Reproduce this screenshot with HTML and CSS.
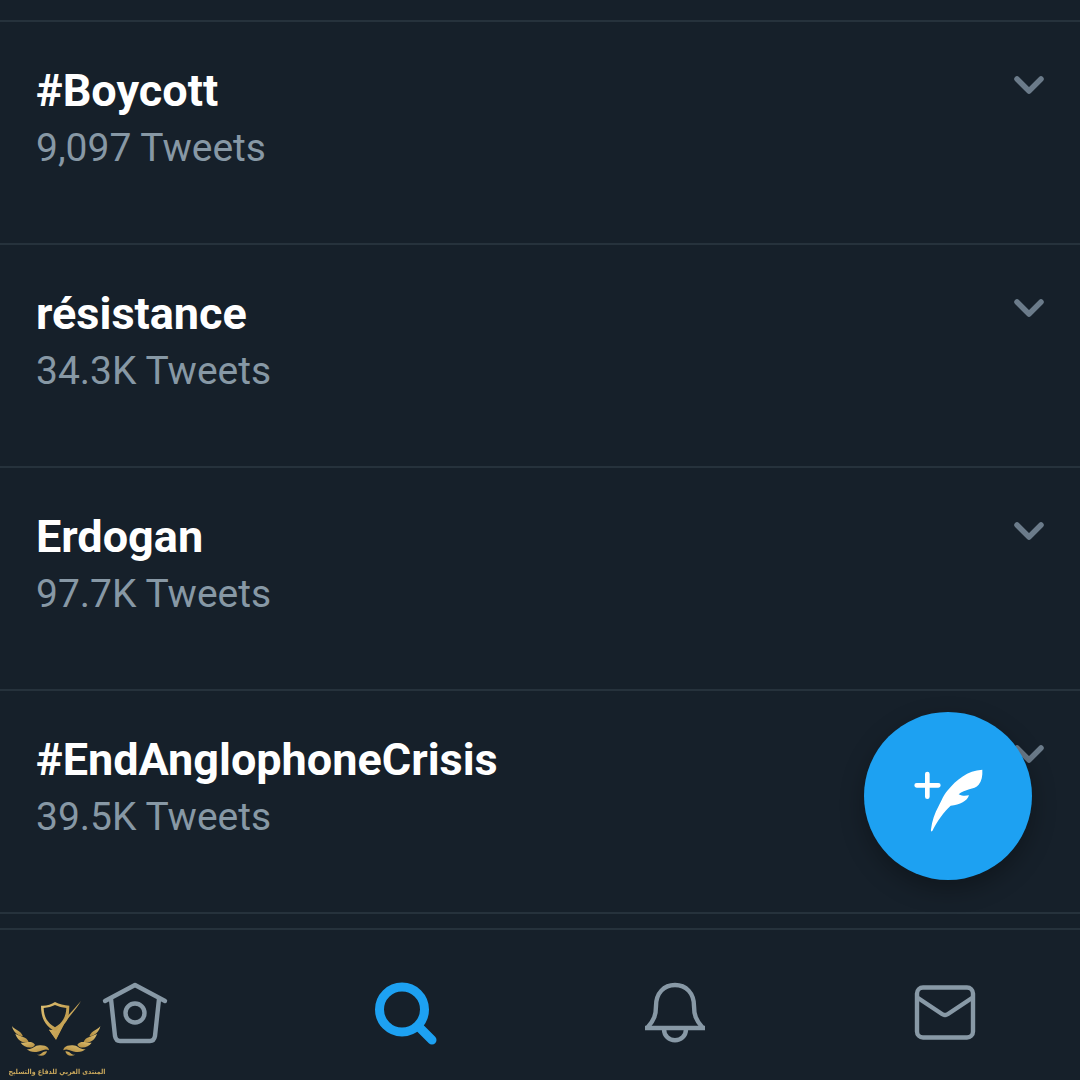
FILE: index.html
```html
<!DOCTYPE html>
<html lang="en">
<head>
  <meta charset="UTF-8" />
  <meta name="viewport" content="width=device-width, initial-scale=1.0"/>
  <title>Trends</title>
  <link rel="stylesheet" href="styles.css">
</head>
<body>

  <svg class="defs" width="0" height="0" aria-hidden="true">
    <symbol id="chevron" viewBox="0 0 36 36">
      <path d="M6 11l12 12 12-12" />
    </symbol>
  </svg>

  <main class="trends">
    <ul class="trend-list">
      <li class="trend">
        <a href="#" class="trend-link">
          <span class="trend-name">#Boycott</span>
          <span class="trend-count">9,097 Tweets</span>
        </a>
        <button type="button" class="trend-more" aria-label="More about #Boycott"><svg><use href="#chevron"/></svg></button>
      </li>
      <li class="trend">
        <a href="#" class="trend-link">
          <span class="trend-name">résistance</span>
          <span class="trend-count">34.3K Tweets</span>
        </a>
        <button type="button" class="trend-more" aria-label="More about résistance"><svg><use href="#chevron"/></svg></button>
      </li>
      <li class="trend">
        <a href="#" class="trend-link">
          <span class="trend-name">Erdogan</span>
          <span class="trend-count">97.7K Tweets</span>
        </a>
        <button type="button" class="trend-more" aria-label="More about Erdogan"><svg><use href="#chevron"/></svg></button>
      </li>
      <li class="trend">
        <a href="#" class="trend-link">
          <span class="trend-name">#EndAnglophoneCrisis</span>
          <span class="trend-count">39.5K Tweets</span>
        </a>
        <button type="button" class="trend-more" aria-label="More about #EndAnglophoneCrisis"><svg><use href="#chevron"/></svg></button>
      </li>
    </ul>
  </main>

  <!-- compose -->
  <button type="button" class="fab" aria-label="New Tweet">
    <svg viewBox="180 174 228 228">
      <path class="plus" d="M232 222v68M200 256h65" />
      <path d="M397 209C398 228 395 243 386 254C373 270 344 265 326 283C338 289 347 288 357 286C352 303 330 315 302 317C281 336 261 364 247 393C244 396 242 393 243 388C246 363 254 340 266 318C276 299 280 286 292 272C320 238 352 212 397 209Z" />
    </svg>
  </button>

  <nav class="tabs">
    <a href="#" class="tab" aria-label="Home">
      <svg viewBox="0 0 72 72">
        <path d="M6 24L36 8l30 16" />
        <path d="M12 22l4 37q1 5 5 5h30q4 0 5-5l4-37" />
        <circle cx="36" cy="36" r="9.5" />
      </svg>
    </a>
    <a href="#" class="tab active" aria-label="Search">
      <svg viewBox="0 0 72 72">
        <circle cx="33" cy="32.5" r="22.5" />
        <path d="M50 50l13 13" />
      </svg>
    </a>
    <a href="#" class="tab" aria-label="Notifications">
      <svg viewBox="0 0 72 72">
        <path d="M9 50C15 43 17 38 17 29C17 16 25 8 36 8S55 16 55 29C55 38 57 43 63 50" />
        <path class="flat" d="M6 51h60" />
        <path d="M25 52c0 15 22 15 22 0" />
      </svg>
    </a>
    <a href="#" class="tab" aria-label="Messages">
      <svg viewBox="0 0 72 72">
        <rect x="8" y="10.500" width="56" height="50" rx="6" />
        <path d="M9 21l24 16q3 2 6 0l24-16" />
      </svg>
    </a>
  </nav>

  <!-- forum watermark -->
  <div class="watermark">
    <svg viewBox="30 30 276 174">
      <defs>
        <linearGradient id="gold" x1="0" y1="0" x2="1" y2="1">
          <stop offset="0" stop-color="#e0c173" />
          <stop offset="1" stop-color="#b08a3c" />
        </linearGradient>
        <g id="wing">
          <path d="M36 108C42 119 62 120 69 139C54 138 39 126 36 108Z" />
          <path d="M46 131C60 141 80 137 87 158C68 160 51 150 46 131Z" />
          <path d="M62 158C79 160 92 149 105 164C99 178 72 174 62 158Z" />
          <path d="M80 177C98 181 103 164 122 166C143 166 147 177 147 181C133 173 121 187 108 186C95 187 87 183 80 177Z" />
          <path d="M111 194C123 197 128 182 141 184C139 195 126 202 111 194Z" />
        </g>
      </defs>
      <g fill="url(#gold)">
        <path fill-rule="evenodd" d="M123 47C141 48 153 43 165 36C178 43 192 46 208 47C207 68 208 87 193 101L168 149L147 119L158 120C135 103 123 84 123 47ZM131 54C132 82 142 98 165 112C188 99 198 80 199 54C186 53 176 50 165 45C155 50 145 53 131 54Z" />
        <path d="M243 33C224 65 196 91 183 119L168 149L147 119L169 123C185 95 217 64 243 33Z" />
        <use href="#wing" />
        <use href="#wing" transform="matrix(-1 0 0 1 337 0)" />
      </g>
    </svg>
    <span lang="ar" dir="rtl">المنتدى العربي للدفاع والتسليح</span>
  </div>

</body>
</html>
```

FILE: styles.css
```css
* { box-sizing: border-box; }
body {
  font-family: Roboto, 'Liberation Sans', sans-serif;
  margin: 0;
  min-height: 100vh;
  display: flex;
  flex-direction: column;
  background: #16202a;
  color: #fff;
}
a {
  color: inherit;
  text-decoration: none;
}
button {
  border: none;
  padding: 0;
  cursor: pointer;
}
svg {
  display: block;
}
.defs {
  position: absolute;
}
.trends {
  flex: 1;
  padding-top: 20px;
}
.trend-list {
  list-style: none;
  margin: 0;
  padding: 0;
  border-bottom: 2px solid #26323c;
}
.trend {
  display: flex;
  align-items: flex-start;
  border-top: 2px solid #26323c;
  padding: 41px 33px 66px 36px;
}
.trend-link {
  flex: 1;
  display: flex;
  flex-direction: column;
}
.trend-name {
  font-size: 45px;
  line-height: 56px;
  font-weight: 700;
}
.trend-count {
  font-size: 39px;
  line-height: 58px;
  color: #8798a5;
}
.trend-more {
  background: none;
  margin-top: 5px;
}
.trend-more svg {
  width: 36px;
  height: 36px;
  fill: none;
  stroke: #6b7b8a;
  stroke-width: 5.5;
  stroke-linecap: round;
  stroke-linejoin: round;
}
.fab {
  position: fixed;
  right: 48px;
  bottom: 200px;
  width: 168px;
  height: 168px;
  border-radius: 50%;
  background: #1da1f2;
  display: flex;
  align-items: center;
  justify-content: center;
  box-shadow: 0 9px 24px rgba(0, 0, 0, 0.3);
}
.fab svg {
  width: 76px;
  height: 76px;
  fill: #fff;
}
.fab .plus {
  stroke: #fff;
  stroke-width: 14;
  stroke-linecap: round;
}
.tabs {
  display: flex;
  height: 152px;
  border-top: 2px solid #26323c;
  padding-top: 47px;
}
.tab {
  flex: 1;
  display: flex;
  justify-content: center;
  align-items: flex-start;
}
.tab svg {
  width: 72px;
  height: 72px;
  fill: none;
  stroke: #8899a6;
  stroke-width: 4.4;
  stroke-linecap: round;
  stroke-linejoin: round;
}
.tab .flat {
  stroke-linecap: butt;
}
.tab.active svg {
  stroke: #1da1f2;
  stroke-width: 9;
}
.watermark {
  position: fixed;
  left: 8px;
  bottom: 0;
  width: 98px;
  display: flex;
  flex-direction: column;
  align-items: center;
  gap: 6px;
  pointer-events: none;
}
.watermark svg {
  width: 92px;
  height: 58px;
  margin-right: 2px;
}
.watermark span {
  font-family: 'DejaVu Sans Condensed', 'DejaVu Sans', sans-serif;
  font-size: 7px;
  line-height: 16px;
  font-weight: 700;
  color: #c9a75c;
  white-space: nowrap;
}
```
